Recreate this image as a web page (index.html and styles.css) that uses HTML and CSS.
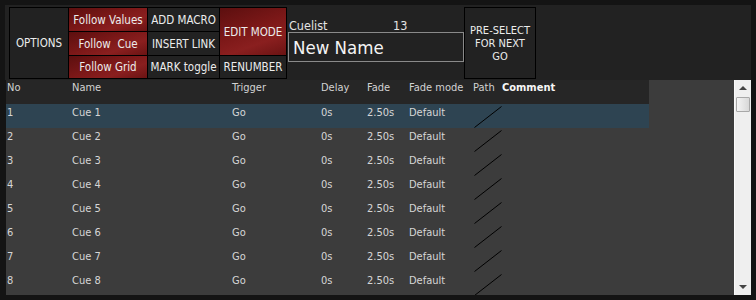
FILE: index.html
```html
<!DOCTYPE html>
<html>
<head>
<meta charset="utf-8">
<link rel="stylesheet" href="styles.css">
</head>
<body>
<div class="app">
  <div class="toolbar">
    <div class="btngrid">
      <div class="btn options">OPTIONS</div>
      <div class="btn red">Follow Values</div>
      <div class="btn">ADD MACRO</div>
      <div class="btn red edit">EDIT MODE</div>
      <div class="btn red">Follow&nbsp;&nbsp;Cue</div>
      <div class="btn">INSERT LINK</div>
      <div class="btn red">Follow Grid</div>
      <div class="btn">MARK toggle</div>
      <div class="btn">RENUMBER</div>
    </div>
    <div class="cuelist">
      <div class="cl-label"><span>Cuelist</span><span>13</span></div>
      <div class="cl-input">New Name</div>
    </div>
    <div class="preselect">PRE-SELECT<br>FOR NEXT<br>GO</div>
  </div>
  <div class="tablewrap">
    <div class="table">
      <div class="row head">
        <span>No</span><span>Name</span><span>Trigger</span><span>Delay</span><span>Fade</span><span>Fade mode</span><span>Path</span><span class="bold">Comment</span>
      </div>
      <div class="row sel">
        <span>1</span><span>Cue 1</span><span>Go</span><span>0s</span><span>2.50s</span><span>Default</span><span class="path"><svg width="28" height="22" viewBox="0 0 28 22"><line x1="0.5" y1="21.5" x2="27.5" y2="0.5" stroke="#000" stroke-width="1"/></svg></span><span></span>
      </div>
      <div class="row">
        <span>2</span><span>Cue 2</span><span>Go</span><span>0s</span><span>2.50s</span><span>Default</span><span class="path"><svg width="28" height="22" viewBox="0 0 28 22"><line x1="0.5" y1="21.5" x2="27.5" y2="0.5" stroke="#000" stroke-width="1"/></svg></span><span></span>
      </div>
      <div class="row">
        <span>3</span><span>Cue 3</span><span>Go</span><span>0s</span><span>2.50s</span><span>Default</span><span class="path"><svg width="28" height="22" viewBox="0 0 28 22"><line x1="0.5" y1="21.5" x2="27.5" y2="0.5" stroke="#000" stroke-width="1"/></svg></span><span></span>
      </div>
      <div class="row">
        <span>4</span><span>Cue 4</span><span>Go</span><span>0s</span><span>2.50s</span><span>Default</span><span class="path"><svg width="28" height="22" viewBox="0 0 28 22"><line x1="0.5" y1="21.5" x2="27.5" y2="0.5" stroke="#000" stroke-width="1"/></svg></span><span></span>
      </div>
      <div class="row">
        <span>5</span><span>Cue 5</span><span>Go</span><span>0s</span><span>2.50s</span><span>Default</span><span class="path"><svg width="28" height="22" viewBox="0 0 28 22"><line x1="0.5" y1="21.5" x2="27.5" y2="0.5" stroke="#000" stroke-width="1"/></svg></span><span></span>
      </div>
      <div class="row">
        <span>6</span><span>Cue 6</span><span>Go</span><span>0s</span><span>2.50s</span><span>Default</span><span class="path"><svg width="28" height="22" viewBox="0 0 28 22"><line x1="0.5" y1="21.5" x2="27.5" y2="0.5" stroke="#000" stroke-width="1"/></svg></span><span></span>
      </div>
      <div class="row">
        <span>7</span><span>Cue 7</span><span>Go</span><span>0s</span><span>2.50s</span><span>Default</span><span class="path"><svg width="28" height="22" viewBox="0 0 28 22"><line x1="0.5" y1="21.5" x2="27.5" y2="0.5" stroke="#000" stroke-width="1"/></svg></span><span></span>
      </div>
      <div class="row">
        <span>8</span><span>Cue 8</span><span>Go</span><span>0s</span><span>2.50s</span><span>Default</span><span class="path"><svg width="28" height="22" viewBox="0 0 28 22"><line x1="0.5" y1="21.5" x2="27.5" y2="0.5" stroke="#000" stroke-width="1"/></svg></span><span></span>
      </div>
    </div>
    <div class="scrollbar">
      <div class="arrow up"></div>
      <div class="thumb"></div>
      <div class="track"></div>
      <div class="arrow down"></div>
    </div>
  </div>
</div>
</body>
</html>
```
FILE: styles.css
```css
* { box-sizing: border-box; }
html, body { margin: 0; padding: 0; }
body {
  background: #141414;
  font-family: "DejaVu Sans Condensed", "DejaVu Sans", "Liberation Sans", sans-serif;
  font-stretch: condensed;
  font-size: 11px;
  color: #dcdcdc;
  width: 756px;
  height: 300px;
  overflow: hidden;
}
.app {
  padding: 5px 5px 0 5px;
}
.toolbar {
  background: #222;
  height: 75px;
  display: flex;
  align-items: flex-start;
  padding: 2px 0 0 4px;
}
.btngrid {
  display: grid;
  grid-template-columns: 58px 78px 71px 66px;
  grid-template-rows: 23px 23px 22px;
  gap: 1px;
  padding: 1px;
  background: #000;
  width: 278px;
  height: 72px;
}
.btn {
  background: #222;
  color: #ececec;
  display: flex;
  align-items: center;
  justify-content: center;
  white-space: nowrap;
  font-size: 11.5px;
}
.options { grid-row: 1 / span 3; grid-column: 1; }
.red {
  background: linear-gradient(160deg, #5c0f0f 0%, #7c1818 45%, #8a1f1f 70%, #6a1313 100%);
}
.edit { grid-row: 1 / span 2; grid-column: 4; }
.cuelist {
  width: 176px;
  margin-left: 1px;
  padding-top: 12px;
}
.cl-label {
  display: grid;
  grid-template-columns: 104px auto;
  font-size: 12.5px;
  color: #e4e4e4;
  height: 13px;
  padding-left: 1px;
  line-height: 13px;
}
.cl-input {
  border: 1px solid #8a8a8a;
  height: 30px;
  font-size: 18.5px;
  color: #f4f4f4;
  padding-left: 4px;
  line-height: 30px;
}
.preselect {
  width: 72px;
  height: 72px;
  border: 1px solid #000;
  display: flex;
  align-items: center;
  justify-content: center;
  text-align: center;
  white-space: nowrap;
  font-size: 11px;
  line-height: 13px;
  color: #ececec;
}
.tablewrap {
  display: flex;
  margin-left: 1px;
  height: 215px;
  overflow: hidden;
}
.table {
  width: 728px;
  background: #3c3c3c;
  height: 215px;
  overflow: hidden;
}
.row {
  width: 643px;
  height: 24px;
  display: grid;
  grid-template-columns: 65px 160px 89px 46px 42px 64px 29px 1fr;
  padding-left: 1px;
  padding-top: 2px;
  font-size: 11px;
  line-height: 14px;
  color: #d6d6d6;
}
.row span { white-space: nowrap; }
.head {
  background: #262626;
  padding-top: 1px;
  color: #d2d2d2;
}
.bold { font-weight: bold; color: #f6f6f6; }
.sel { background: #2e4452; }
.path { position: relative; }
.path svg {
  position: absolute;
  left: 1px;
  top: 0;
}
.scrollbar {
  width: 17px;
  height: 215px;
  background: #efefef;
  border-left: 1px solid #fafafa;
  display: flex;
  flex-direction: column;
  align-items: center;
}
.arrow {
  width: 0;
  height: 0;
  border-left: 4px solid transparent;
  border-right: 4px solid transparent;
}
.up {
  border-bottom: 4px solid #444;
  margin-top: 6px;
}
.down {
  border-top: 4px solid #444;
  margin-bottom: 6px;
}
.thumb {
  width: 14px;
  height: 15px;
  margin-top: 7px;
  border: 1px solid #a8a8a8;
  border-radius: 1px;
  background: linear-gradient(90deg, #f4f4f4, #d8d8d8);
}
.track { flex: 1; }
```
